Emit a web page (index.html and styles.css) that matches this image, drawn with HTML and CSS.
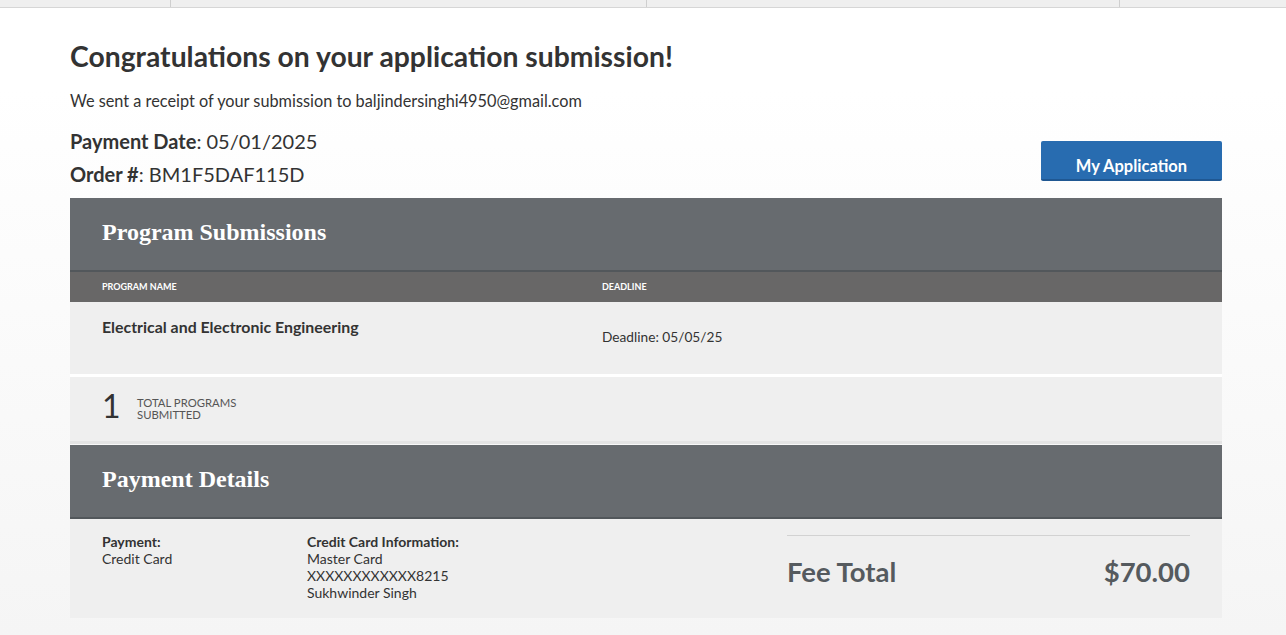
FILE: index.html
```html
<!DOCTYPE HTML>
<html>

<head>
  <meta charset="UTF-8"/>
  <meta name="viewport" content="width=device-width, initial-scale=1.0">
  <title>Application Submitted</title>

  <link rel="stylesheet" href="styles.css">
</head>

<body>
  <div class="topbar">
    <div class="tab tab-first"></div>
    <div class="tab tab-second"></div>
    <div class="tab tab-third"></div>
    <div class="tab tab-last"></div>
  </div>

  <div class="page">
    <h1>Congratulations on your application submission!</h1>

    <p class="receipt">We sent a receipt of your submission to baljindersinghi4950@gmail.com</p>

    <div class="order">
      <div class="order-info">
        <div><b>Payment Date</b>: 05/01/2025</div>
        <div><b>Order #</b>: BM1F5DAF115D</div>
      </div>
      <a class="btn" href="#">My Application</a>
    </div>

    <div class="panel">
      <h2 class="panel-title">Program Submissions</h2>

      <div class="cols cols-head">
        <div>Program Name</div>
        <div>Deadline</div>
      </div>

      <div class="cols program">
        <div class="program-name">Electrical and Electronic Engineering</div>
        <div class="program-deadline">Deadline: 05/05/25</div>
      </div>

      <div class="total">
        <span class="total-num">1</span>
        <span class="total-label">Total Programs<br/>Submitted</span>
      </div>
    </div>

    <div class="panel">
      <h2 class="panel-title">Payment Details</h2>

      <div class="payment">
        <div class="pay-col pay-type">
          <b>Payment:</b><br/>
          Credit Card
        </div>
        <div class="pay-col pay-card">
          <b>Credit Card Information:</b><br/>
          Master Card<br/>
          XXXXXXXXXXXX8215<br/>
          Sukhwinder Singh
        </div>
        <div class="fee">
          <span>Fee Total</span>
          <span>$70.00</span>
        </div>
      </div>
    </div>
  </div>
</body>

</html>
```

FILE: styles.css
```css
html {
  background: #f4f4f4;
}

body {
  margin: 0;
  min-height: 635px;
  color: #333;
  font: 15px Lato, "Open Sans", sans-serif;
  background: linear-gradient(#fff 0, #fff 90px, #f5f5f5 635px);
}

.topbar {
  display: flex;
  height: 7px;
  background-color: #efefef;
  border-bottom: 1px solid #d6d6d6;
}

.tab {
  border-right: 1px solid #cfcfcf;
}

.tab-first {
  width: 170px;
}

.tab-second {
  width: 475px;
}

.tab-third {
  width: 472px;
}

.tab-last {
  flex: 1;
  border-right: none;
}

.page {
  width: 1152px;
  margin-left: 70px;
}

h1 {
  margin: 31px 0 0 0;
  font-size: 28.3px;
  line-height: 34px;
  font-weight: bold;
  color: #333;
}

.receipt {
  margin: 18px 0 0 0;
  font-size: 16.3px;
  line-height: 20px;
}

.order {
  display: flex;
  justify-content: space-between;
  align-items: flex-end;
  margin-top: 14px;
  margin-bottom: 7px;
}

.order-info {
  font-size: 20px;
  line-height: 33px;
}

.order-info b {
  font-weight: bold;
}

.btn {
  display: block;
  width: 181px;
  height: 38px;
  margin-bottom: 10px;
  line-height: 51px;
  overflow: hidden;
  background-color: #286cb0;
  border-bottom: 2px solid #1f5792;
  border-radius: 2px;
  color: #fff;
  font-size: 16.5px;
  font-weight: bold;
  text-align: center;
  text-decoration: none;
}

.panel {
  background-color: #efefef;
}

.panel + .panel {
  margin-top: 1px;
}

.panel-title {
  margin: 0;
  height: 72px;
  padding: 0 32px;
  background-color: #676b6f;
  border-bottom: 2px solid #52575b;
  color: #fff;
  font: bold 24px/68px "Liberation Serif", serif;
}

.cols {
  display: grid;
  grid-template-columns: 500px 1fr;
  padding: 0 32px;
}

.cols-head {
  height: 30px;
  line-height: 30px;
  background-color: #686767;
  color: #fff;
  font-size: 9px;
  font-weight: bold;
  text-transform: uppercase;
}

.program {
  height: 72px;
  border-bottom: 3px solid #fff;
}

.program-name {
  margin-top: 15px;
  font-size: 15.9px;
  font-weight: bold;
}

.program-deadline {
  margin-top: 26px;
  font-size: 13.7px;
}

.total {
  display: flex;
  align-items: center;
  height: 64px;
  padding: 0 32px;
  border-bottom: 3px solid #e4e4e4;
}

.total-num {
  width: 35px;
  margin-top: -6px;
  font-size: 32px;
  line-height: 32px;
  color: #333;
}

.total-label {
  font-size: 11.3px;
  line-height: 12px;
  color: #555;
  text-transform: uppercase;
}

.payment {
  display: flex;
  padding: 14px 32px 18px 32px;
  height: 67px;
  font-size: 14px;
  line-height: 17px;
}

.pay-type {
  width: 205px;
}

.pay-card {
  width: 480px;
}

.fee {
  display: flex;
  justify-content: space-between;
  align-items: center;
  flex: 1;
  height: 58px;
  margin-top: 2px;
  border-top: 1px solid #d2d2d2;
  padding-top: 6px;
  color: #555a5e;
  font-size: 27.5px;
  font-weight: bold;
}
```
